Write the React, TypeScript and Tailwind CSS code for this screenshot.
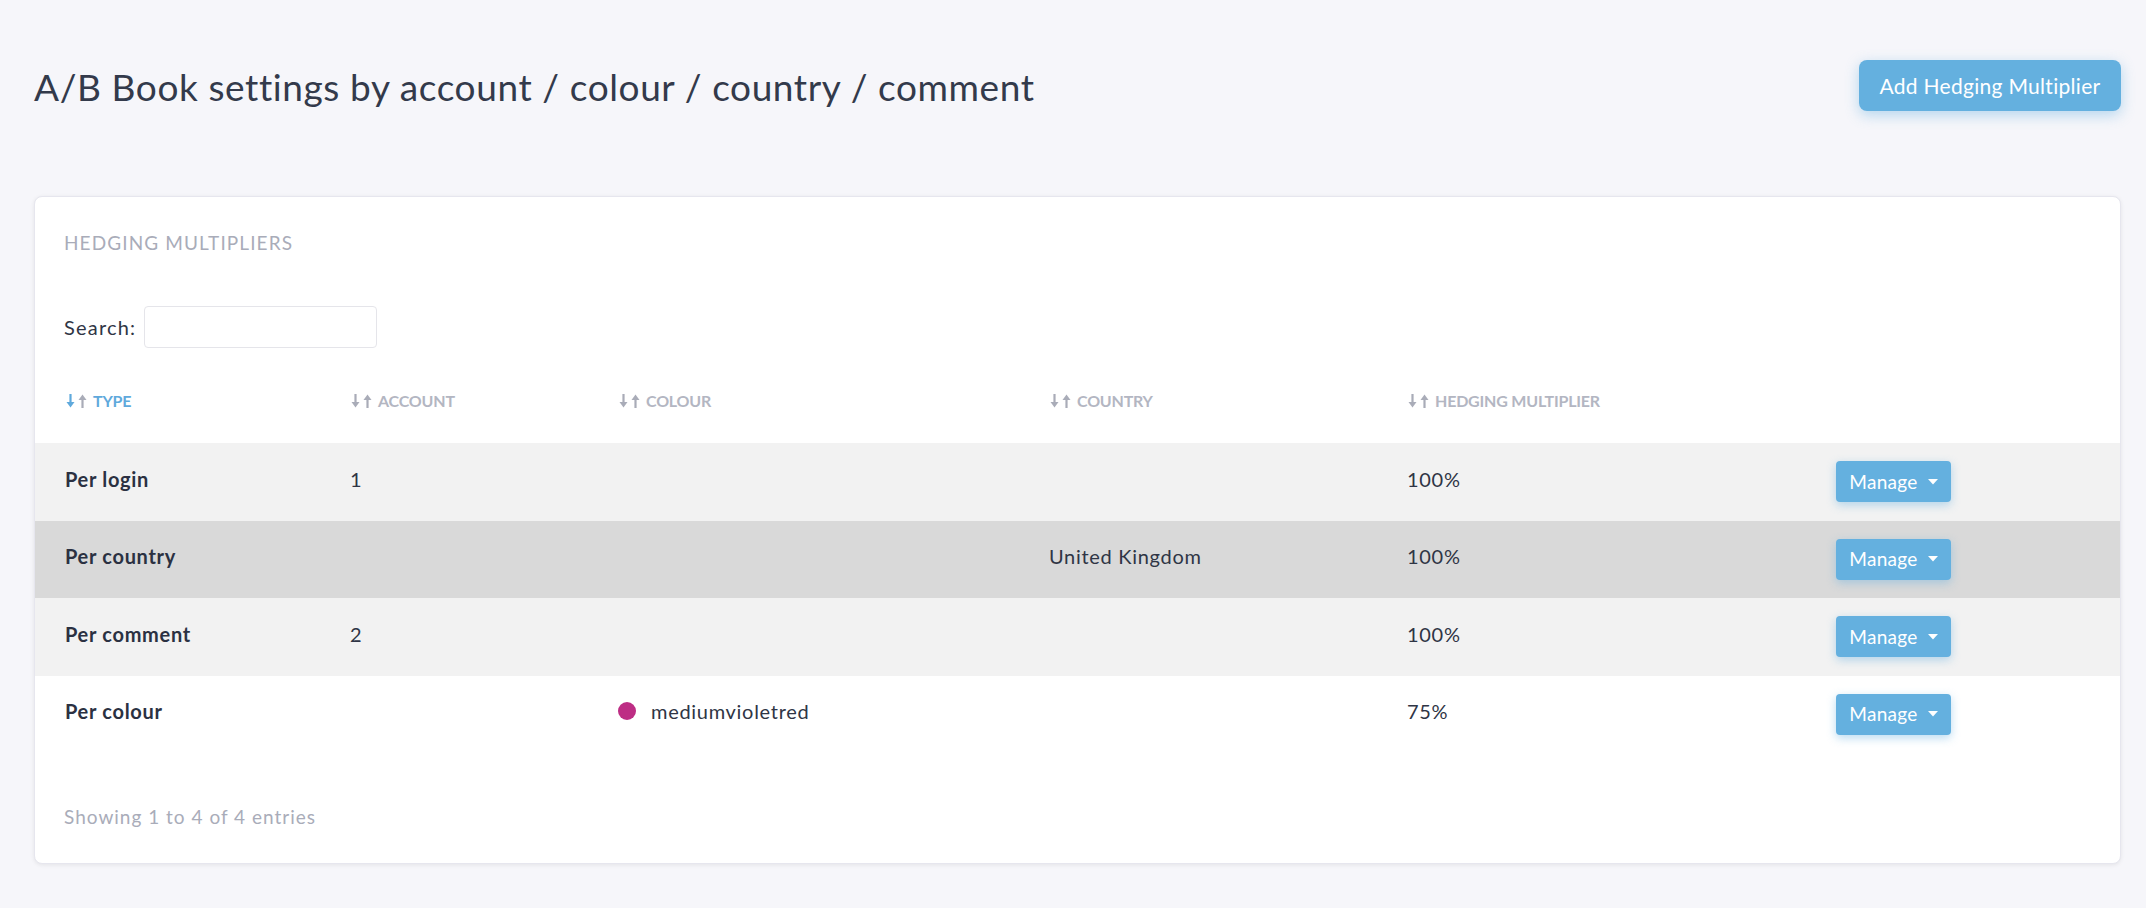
import React from "react";

const font = { fontFamily: "Lato, 'Noto Sans', sans-serif" };

function SortIcon({ active }: { active?: boolean }) {
  const down = active ? "#5fa9dc" : "#a9acb8";
  const up = "#a9acb8";
  return (
    <svg width="24" height="16" viewBox="0 0 24 16" className="mr-[4px] shrink-0">
      <path d="M5.5 1 V11" stroke={down} strokeWidth="2.2" />
      <path d="M1.5 9 L5.5 14.5 L9.5 9 Z" fill={down} />
      <path d="M17.5 15 V5" stroke={up} strokeWidth="2.2" />
      <path d="M13.5 7 L17.5 1.5 L21.5 7 Z" fill={up} />
    </svg>
  );
}

type Row = {
  type: string;
  account: string;
  colour?: string;
  country: string;
  mult: string;
  bg: string;
};

const rows: Row[] = [
  { type: "Per login", account: "1", country: "", mult: "100%", bg: "bg-[#f2f2f2]" },
  { type: "Per country", account: "", country: "United Kingdom", mult: "100%", bg: "bg-[#d9d9d9]" },
  { type: "Per comment", account: "2", country: "", mult: "100%", bg: "bg-[#f2f2f2]" },
  { type: "Per colour", account: "", colour: "mediumvioletred", country: "", mult: "75%", bg: "bg-white" },
];

const cols = "grid grid-cols-[285px_268px_431px_358px_429px_1fr]";

export default function App() {
  return (
    <div style={font} className="min-h-screen w-full bg-[#f6f6fa] pl-[34px] pr-[25px] pt-[60px] pb-[44px] text-[#2f3545]">
      <div className="flex items-start justify-between">
        <h1 className="mt-[4px] text-[37px] leading-[46px] font-normal tracking-[0.6px] text-[#333a4b]">
          A/B Book settings by account / colour / country / comment
        </h1>
        <button className="h-[51px] w-[262px] rounded-[8px] bg-[#64b0df] text-[21px] font-normal tracking-[0.3px] text-white shadow-[0_4px_14px_rgba(100,176,223,0.45)]">
          Add Hedging Multiplier
        </button>
      </div>

      <div className="mt-[85px] rounded-[8px] border border-[#e6e6ee] bg-white shadow-[0_1px_4px_rgba(0,0,0,0.08)] pb-[31px]">
        <div className="px-[29px] pt-[34px] text-[19px] leading-[24px] tracking-[1.1px] text-[#a9acb9]">
          HEDGING MULTIPLIERS
        </div>

        <div className="mt-[51px] flex items-center px-[29px]">
          <span className="text-[20px] tracking-[1.2px] text-[#2f3545]">Search:</span>
          <input className="ml-[8px] h-[42px] w-[233px] rounded-[4px] border border-[#e5e5ea] bg-white outline-none" />
        </div>

        <div className={`${cols} mt-[41px] h-[54px] items-start`}>
          {[
            { t: "TYPE", a: true },
            { t: "ACCOUNT" },
            { t: "COLOUR" },
            { t: "COUNTRY" },
            { t: "HEDGING MULTIPLIER" },
            { t: "" },
          ].map((h, i) => (
            <div key={i} className="flex items-center pl-[30px]">
              {h.t && (
                <>
                  <SortIcon active={h.a} />
                  <span
                    className={`text-[16px] font-bold tracking-[-0.2px] ${h.a ? "text-[#5fa9dc]" : "text-[#b3b6c2]"}`}
                  >
                    {h.t}
                  </span>
                </>
              )}
            </div>
          ))}
        </div>

        {rows.map((r, i) => (
          <div key={i} className={`${cols} ${r.bg} h-[77.5px] items-center text-[20px] tracking-[0.7px]`}>
            <div className="pl-[30px] pb-[6px] font-bold text-[#2b3142]">{r.type}</div>
            <div className="pl-[30px] pb-[6px]">{r.account}</div>
            <div className="flex items-center pl-[30px] pb-[6px]">
              {r.colour && (
                <>
                  <span className="mr-[15px] h-[18px] w-[18px] rounded-full bg-[#bd2d84]" />
                  <span>{r.colour}</span>
                </>
              )}
            </div>
            <div className="pl-[30px] pb-[6px]">{r.country}</div>
            <div className="pl-[30px] pb-[6px]">{r.mult}</div>
            <div className="pl-[30px]">
              <button className="flex h-[41px] w-[115px] items-center justify-center rounded-[4px] bg-[#64b0df] text-[19px] font-normal tracking-[0.3px] text-white shadow-[0_3px_10px_rgba(100,176,223,0.45)]">
                Manage
                <svg width="10" height="6" viewBox="0 0 10 6" className="ml-[10px]">
                  <path d="M0 0 H10 L5 5.5 Z" fill="white" />
                </svg>
              </button>
            </div>
          </div>
        ))}

        <div className="mt-[50px] px-[29px] text-[19px] tracking-[1px] text-[#a9acb9]">Showing 1 to 4 of 4 entries</div>
      </div>
    </div>
  );
}
